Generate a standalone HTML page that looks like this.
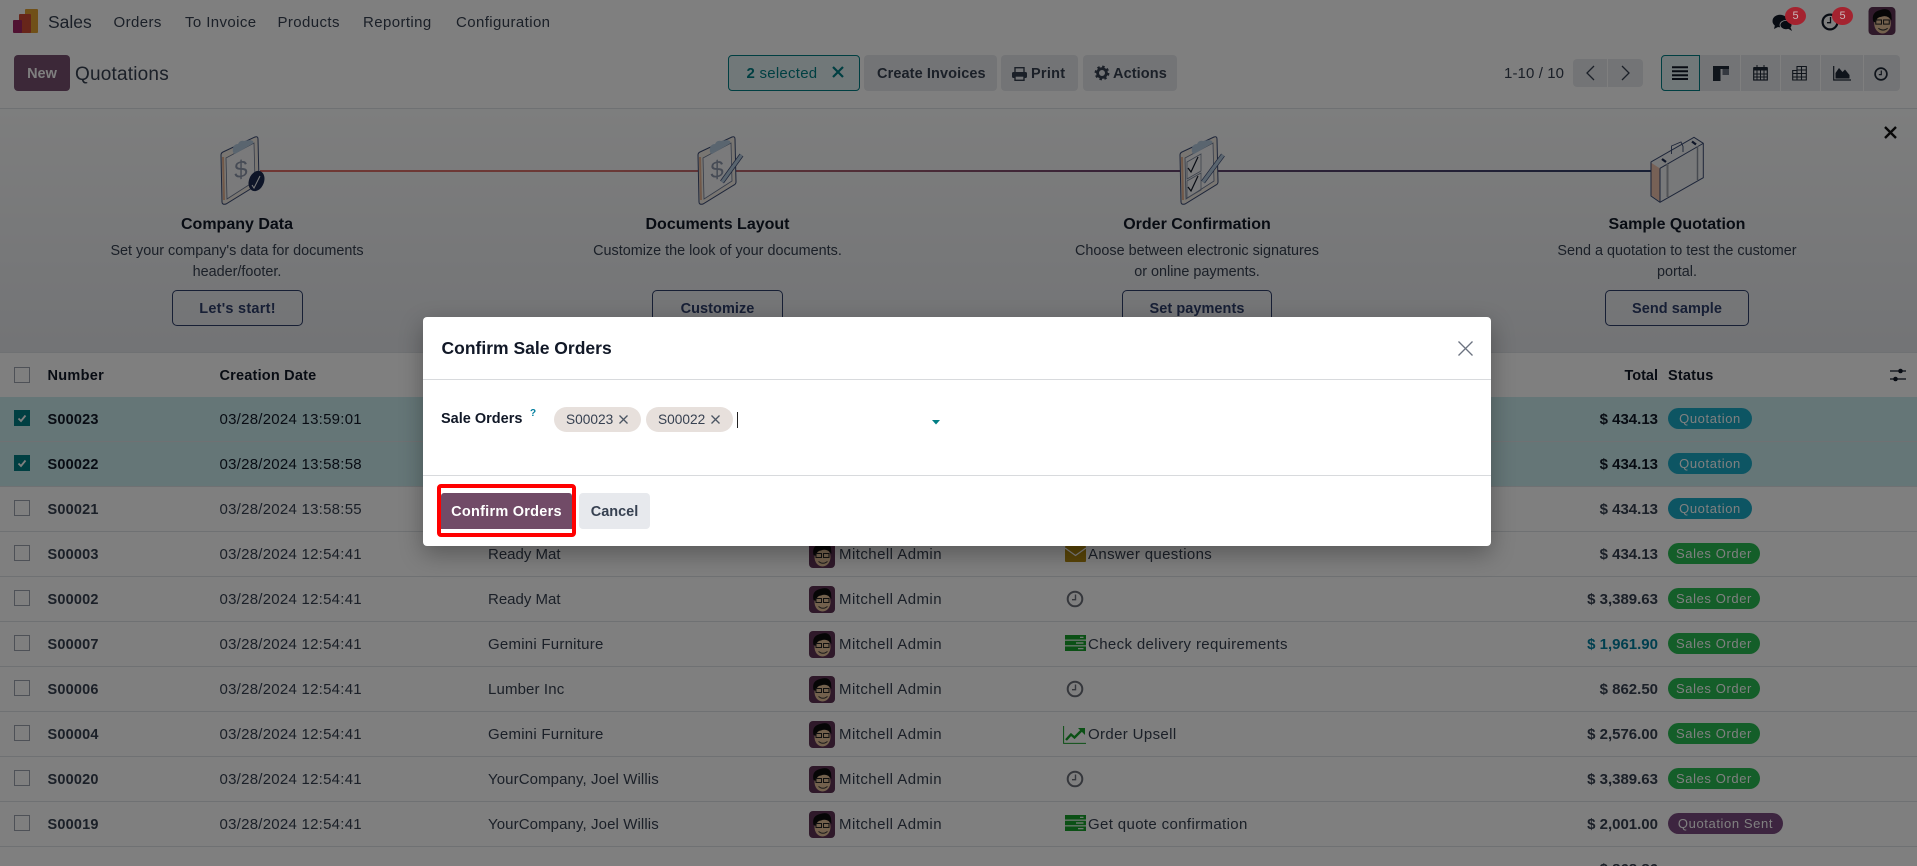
<!DOCTYPE html>
<html lang="en"><head><meta charset="utf-8"><title>Quotations</title>
<style>
html,body{margin:0;padding:0;width:1917px;height:866px;overflow:hidden}
body{background:#fff;font-family:"Liberation Sans",sans-serif;color:#374151;font-size:15px}
#p{position:relative;width:1917px;height:866px;overflow:hidden;background:#fff}
.t{position:absolute;white-space:nowrap;line-height:20px}
.nav{font-size:15px;letter-spacing:.4px;top:13px;color:#374151}
.btn{position:absolute;top:55px;height:36px;border-radius:4px;background:#e7e9ed}
.bt{font-weight:bold;font-size:14.5px;top:64px;color:#374151;letter-spacing:.1px}
.ttl{font-weight:bold;font-size:16px;top:215px;color:#111827;text-align:center;width:400px}
.dsc{font-size:14.4px;text-align:center;width:400px;color:#374151}
.ob{position:absolute;top:290px;height:34px;border:1px solid #2f3f6a;border-radius:5px;font-weight:bold;font-size:14.5px;line-height:36px;text-align:center;color:#2f3f6a;letter-spacing:.05px}
.r{position:absolute;left:0;width:1917px;height:44px;border-bottom:1px solid #dee2e6;background:#fff}
.r.s{background:#caecee;color:#111827}
.cb{position:absolute;left:14px;top:13px;width:14px;height:14px;border:1px solid #9ca3af;background:#fff;display:block}
.cb.on{border-color:#017e84;background:#017e84}
.cb.on svg{position:absolute;left:2px;top:2px}
.n{position:absolute;left:47.5px;top:13px;font-weight:bold;font-size:14.5px;letter-spacing:.2px;line-height:20px}
.d{position:absolute;left:219.5px;top:13px;letter-spacing:.25px;line-height:20px;white-space:nowrap}
.c{position:absolute;left:488px;top:13px;letter-spacing:.1px;line-height:20px;white-space:nowrap}
.m{position:absolute;left:839px;top:13px;letter-spacing:.45px;line-height:20px;white-space:nowrap}
.a{position:absolute;left:1088px;top:13px;letter-spacing:.36px;line-height:20px;white-space:nowrap}
.av{position:absolute;left:809px;top:9px;width:26px;height:27px}
.tot{position:absolute;right:259px;top:13px;font-weight:bold;font-size:15px;line-height:20px;white-space:nowrap}
.bd{position:absolute;left:1668px;top:11px;height:21px;line-height:21px;border-radius:11px;color:#fff;font-size:13px;letter-spacing:.6px;text-align:center}
.q{width:84px;background:#1aaac6}
.so{width:92px;background:#28bc52}
.qs{width:115px;background:#7a4b80}
#ov{position:absolute;left:0;top:0;width:1917px;height:866px;background:rgba(0,0,0,.5);z-index:10}
#md{position:absolute;left:423px;top:317px;width:1068px;height:229px;background:#fff;border-radius:4px;z-index:20;box-shadow:0 8px 24px rgba(0,0,0,.3)}
.tag{position:absolute;top:90px;height:25px;border-radius:13px;background:#e7e0dc;font-size:13.7px;line-height:26px;color:#374151;padding-left:12px;box-sizing:border-box}
.red{position:absolute;z-index:20;width:21px;height:18px;border-radius:50%;background:#a4232f;color:#c9b8ba;font-size:11px;line-height:18px;text-align:center;top:7px}
svg{display:block}
</style></head>
<body>
<div id="p">
<svg width="0" height="0" style="position:absolute">
<defs>
<symbol id="av" viewBox="0 0 26 27">
<rect width="26" height="27" rx="4" fill="#5e3355"/>
<ellipse cx="13.5" cy="16" rx="8" ry="9.5" fill="#e6c29a"/>
<path d="M4.500 14Q2.500 5 11 3Q20 0 22 7L22.500 13Q18 7 12 9.500Q8 9.500 7 15Z" fill="#0d0d0d"/>
<rect x="7" y="12.500" width="5.500" height="4" fill="none" stroke="#222" stroke-width="1"/>
<rect x="14.500" y="12.500" width="5.500" height="4" fill="none" stroke="#222" stroke-width="1"/>
<path d="M9.500 20.500Q14 24 18.500 20.500" fill="none" stroke="#333" stroke-width="1"/>
</symbol>
<symbol id="clk" viewBox="0 0 18 18">
<circle cx="9" cy="9" r="7.300" fill="none" stroke="#6b6f78" stroke-width="2"/>
<path d="M9.500 4.500V9.700H6" fill="none" stroke="#6b6f78" stroke-width="1.400"/>
</symbol>
<symbol id="srv" viewBox="0 0 21 16">
<rect width="21" height="4.600" fill="#17a02a"/><rect y="5.700" width="21" height="4.600" fill="#17a02a"/><rect y="11.400" width="21" height="4.600" fill="#17a02a"/>
<path d="M15 2.300h3.500M11 8h7.500M13 13.700h5.500" stroke="#fff" stroke-width="1.200"/>
</symbol>
<symbol id="board" viewBox="0 0 48 70">
<path d="M1 19Q1 17 3 16L35 1Q38 0 38 3L39 46Q39 48 37 49L6 68Q2 69 2 66Z" fill="#f3ece5" stroke="#3a4a72" stroke-width="1"/>
<path d="M3 21L4 64" stroke="#e2b090" stroke-width="2"/>
<path d="M6 22L34 7L35 45L7 63Z" fill="#f4f5f6" stroke="#6a7690" stroke-width=".8"/>
<path d="M13 12Q14 8 18 8Q20 4 24 5L30 4L33 5Q34 7 32 8L15 18Q12 17 13 12Z" fill="#b5cadf"/>
</symbol>
</defs>
</svg>

<!-- top nav -->
<svg style="position:absolute;left:13px;top:9px" width="25" height="24"><rect x="12" y="0" width="13" height="24" rx="1" fill="#e0a030"/><rect x="6" y="5" width="12" height="19" rx="1" fill="#cf4a34"/><rect x="0" y="11" width="9" height="13" rx="1" fill="#a02464"/></svg>
<span class="t" style="left:48px;top:12px;font-size:17.5px;color:#374151">Sales</span>
<span class="t nav" style="left:113.5px">Orders</span>
<span class="t nav" style="left:185px">To Invoice</span>
<span class="t nav" style="left:277.5px">Products</span>
<span class="t nav" style="left:363px">Reporting</span>
<span class="t nav" style="left:456px">Configuration</span>

<svg style="position:absolute;left:1772px;top:13px" width="24" height="19" viewBox="0 0 24 19"><ellipse cx="8" cy="8" rx="7.500" ry="6.300" fill="#111827"/><path d="M3 12L2 16L8 13Z" fill="#111827"/><ellipse cx="14" cy="12" rx="6" ry="4.600" fill="#111827" stroke="#fff" stroke-width=".8"/><path d="M15 15L20 18L18 13Z" fill="#111827"/></svg>
<span class="red" style="left:1785px">5</span>
<svg style="position:absolute;left:1820px;top:13px" width="20" height="18" viewBox="0 0 20 18"><circle cx="10" cy="9" r="7.400" fill="none" stroke="#111827" stroke-width="2.200"/><path d="M10.500 4V9.700H7" fill="none" stroke="#111827" stroke-width="1.300"/></svg>
<span class="red" style="left:1832px">5</span>
<svg style="position:absolute;left:1868px;top:7px" width="28" height="28"><use href="#av"/></svg>

<!-- control panel -->
<div class="btn" style="left:14px;width:56px;background:#785070"></div>
<span class="t" style="left:14px;width:56px;top:64px;text-align:center;color:#fff;font-weight:bold;font-size:14.5px">New</span>
<span class="t" style="left:75px;top:65px;font-size:19px;letter-spacing:.2px;color:#374151">Quotations</span>

<div class="btn" style="left:728px;width:130px;height:34px;background:#e3f1f2;border:1px solid #017e84"></div>
<span class="t" style="left:746.5px;top:64px;color:#017e84;font-size:15px;letter-spacing:.25px"><b>2</b> selected</span>
<svg style="position:absolute;left:832px;top:66px" width="12" height="12"><path d="M1 1L11 11M11 1L1 11" stroke="#017e84" stroke-width="2.200"/></svg>
<div class="btn" style="left:864px;width:133px"></div><span class="t bt" style="left:877px">Create Invoices</span>
<div class="btn" style="left:1001px;width:77px"></div>
<svg style="position:absolute;left:1012px;top:67px" width="15" height="14" viewBox="0 0 15 14"><rect x="3" y="0.700" width="9" height="5" fill="none" stroke="#374151" stroke-width="1.400"/><rect x="0" y="5" width="15" height="6" rx="1.500" fill="#374151"/><rect x="3" y="9" width="9" height="4.300" fill="#e7e9ed" stroke="#374151" stroke-width="1.400"/></svg>
<span class="t bt" style="left:1031px;letter-spacing:.25px">Print</span>
<div class="btn" style="left:1083px;width:94px"></div>
<svg style="position:absolute;left:1094px;top:65px" width="16" height="16" viewBox="0 0 16 16"><circle cx="8" cy="8" r="6.300" fill="none" stroke="#374151" stroke-width="2.200" stroke-dasharray="2.470 2.470"/><circle cx="8" cy="8" r="4.400" fill="none" stroke="#374151" stroke-width="2.800"/></svg>
<span class="t bt" style="left:1113px">Actions</span>

<span class="t" style="left:1504px;top:64px;font-size:15px;letter-spacing:.1px">1-10 / 10</span>
<div class="btn" style="left:1573px;top:59px;width:70px;height:28px"></div>
<div style="position:absolute;left:1607px;top:59px;width:1px;height:28px;background:#fff"></div>
<svg style="position:absolute;left:1585px;top:65px" width="10" height="16"><path d="M9 1L2 8L9 15" fill="none" stroke="#374151" stroke-width="1.300"/></svg>
<svg style="position:absolute;left:1621px;top:65px" width="10" height="16"><path d="M1 1L8 8L1 15" fill="none" stroke="#374151" stroke-width="1.300"/></svg>

<div class="btn" style="left:1661px;width:239px;background:#e7e9ed"></div>
<div class="btn" style="left:1661px;width:37px;height:34px;background:#e3f1f2;border:1px solid #017e84;border-radius:4px 0 0 4px"></div>
<div style="position:absolute;left:1740px;top:55px;width:1px;height:36px;background:#fff"></div>
<div style="position:absolute;left:1780px;top:55px;width:1px;height:36px;background:#fff"></div>
<div style="position:absolute;left:1820px;top:55px;width:1px;height:36px;background:#fff"></div>
<div style="position:absolute;left:1863px;top:55px;width:1px;height:36px;background:#fff"></div>
<svg style="position:absolute;left:1672px;top:66px" width="16" height="14"><path d="M0 1.200h16M0 5.200h16M0 9.200h16M0 13h16" stroke="#111827" stroke-width="2"/></svg>
<svg style="position:absolute;left:1713px;top:66px" width="16" height="15"><rect x="0" y="0" width="16" height="3" fill="#1f2937"/><rect x="0" y="0" width="7.500" height="15" fill="#1f2937"/><rect x="9.500" y="3" width="6.500" height="6" fill="#6b7280"/></svg>
<svg style="position:absolute;left:1753px;top:65px" width="15" height="16" viewBox="0 0 15 16"><rect x=".7" y="3" width="13.600" height="12" fill="none" stroke="#1f2937" stroke-width="1.200"/><rect x=".7" y="2" width="13.600" height="3.500" fill="#1f2937"/><path d="M4 0v3M11 0v3M.7 9h13.600M.7 12h13.600M4 5v10M7.500 5v10M11 5v10" stroke="#1f2937" stroke-width="1"/></svg>
<svg style="position:absolute;left:1792px;top:65px" width="15" height="16" viewBox="0 0 15 16"><path d="M5 1.500h9.300V15H.7V5.500H5ZM.7 8.500h13.600M.7 12h13.600M5 1.500V15M9.500 1.500V15M5 5h9.300" fill="none" stroke="#1f2937" stroke-width="1.100"/></svg>
<svg style="position:absolute;left:1833px;top:66px" width="18" height="15" viewBox="0 0 18 15"><path d="M.7 0V14H18" fill="none" stroke="#1f2937" stroke-width="1.200"/><path d="M2.500 12.500V7L6 2L9.500 6L12 3.500L16.500 9V12.500Z" fill="#1f2937"/></svg>
<svg style="position:absolute;left:1874px;top:67px" width="14" height="14" viewBox="0 0 14 14"><circle cx="7" cy="7" r="5.900" fill="none" stroke="#1f2937" stroke-width="1.700"/><path d="M7.300 3.500V7.600H4.800" fill="none" stroke="#1f2937" stroke-width="1.200"/></svg>

<div style="position:absolute;left:0;top:108px;width:1917px;height:1px;background:#dee2e6"></div>

<!-- onboarding banner -->
<div style="position:absolute;left:0;top:109px;width:1917px;height:243px;background:linear-gradient(#fbfcfc,#e6e8ec)"></div>
<div style="position:absolute;left:0;top:352px;width:1917px;height:1px;background:#dee2e6"></div>
<div style="position:absolute;left:260px;top:170px;width:1392px;height:2px;background:linear-gradient(90deg,#e06f68 0%,#d5736f 25%,#70466f 60%,#2f3f6a 100%)"></div>

<svg style="position:absolute;left:220px;top:136px" width="48" height="70"><use href="#board"/></svg>
<svg style="position:absolute;left:0;top:0;overflow:visible" width="1" height="1">
<text x="241" y="178" font-size="24" text-anchor="middle" fill="#8d96aa" font-family="Liberation Sans,sans-serif" transform="skewY(-10) translate(0,42)">$</text>
<ellipse cx="256.500" cy="181" rx="7.500" ry="10.500" transform="rotate(22 256.500 181)" fill="#1d2b50"/>
<path d="M252 185L254 188L260 176" fill="none" stroke="#fff" stroke-width="1"/>
</svg>

<svg style="position:absolute;left:697px;top:136px" width="48" height="70"><use href="#board"/></svg>
<svg style="position:absolute;left:0;top:0;overflow:visible" width="1" height="1">
<text x="717" y="178" font-size="24" text-anchor="middle" fill="#8d96aa" font-family="Liberation Sans,sans-serif" transform="skewY(-10) translate(0,126)">$</text>
<path d="M741.500 155L722 182" stroke="#3a4a72" stroke-width="4.600"/><path d="M741.500 155L722 182" stroke="#b5cadf" stroke-width="3.200"/>
</svg>

<svg style="position:absolute;left:1179px;top:136px" width="48" height="70"><use href="#board"/></svg>
<svg style="position:absolute;left:0;top:0;overflow:visible" width="1" height="1">
<path d="M1187 162L1201 154V171L1187 179ZM1187 181L1201 173V190L1187 198Z" fill="none" stroke="#7a8498" stroke-width=".8"/>
<path d="M1188 168L1191 172L1198 157M1188 187L1191 191L1198 176" fill="none" stroke="#111827" stroke-width="1.200"/>
<path d="M1223 155L1203 182" stroke="#3a4a72" stroke-width="4.600"/><path d="M1223 155L1203 182" stroke="#b5cadf" stroke-width="3.200"/>
</svg>

<svg style="position:absolute;left:0;top:0;overflow:visible" width="1" height="1">
<path d="M1651 162L1694 137.300L1703.300 143.300V177.700L1660 202.300L1651 196Z" fill="#f1f3f4" stroke="#3a4a72" stroke-width="1"/>
<path d="M1651.500 163L1660 168.500V201.500L1651.500 195.500Z" fill="#eec2ac"/>
<path d="M1660 168.300L1703 143.500" stroke="#3a4a72" stroke-width="1"/>
<path d="M1660 168.300V202" stroke="#3a4a72" stroke-width="1"/>
<path d="M1667.500 164V197" stroke="#a4a8ae" stroke-width="2"/>
<path d="M1697.500 146V180" stroke="#8e94a0" stroke-width="1.500"/>
<path d="M1671.500 154V146L1681 142L1683 146.500V152" fill="none" stroke="#3a4a72" stroke-width=".9"/>
<path d="M1662 159L1666 162M1692 141.500L1696 144.500" stroke="#1d2b50" stroke-width="2.300"/>
</svg>

<span class="t ttl" style="left:37px">Company Data</span>
<span class="t dsc" style="left:37px;top:241px">Set your company's data for documents</span>
<span class="t dsc" style="left:37px;top:262px">header/footer.</span>
<div class="ob" style="left:172px;width:129px;letter-spacing:.25px">Let's start!</div>

<span class="t ttl" style="left:517.500px">Documents Layout</span>
<span class="t dsc" style="left:517.500px;top:241px">Customize the look of your documents.</span>
<div class="ob" style="left:652px;width:129px">Customize</div>

<span class="t ttl" style="left:997px">Order Confirmation</span>
<span class="t dsc" style="left:997px;top:241px">Choose between electronic signatures</span>
<span class="t dsc" style="left:997px;top:262px">or online payments.</span>
<div class="ob" style="left:1122px;width:148px">Set payments</div>

<span class="t ttl" style="left:1477px">Sample Quotation</span>
<span class="t dsc" style="left:1477px;top:241px">Send a quotation to test the customer</span>
<span class="t dsc" style="left:1477px;top:262px">portal.</span>
<div class="ob" style="left:1605px;width:142px">Send sample</div>

<svg style="position:absolute;left:1884px;top:126px" width="13" height="13"><path d="M1 1L12 12M12 1L1 12" stroke="#111" stroke-width="2.400"/></svg>

<!-- list header -->
<div class="r" style="top:353px;color:#111827"><i class="cb" style="top:14px"></i>
<b class="n" style="letter-spacing:.3px">Number</b>
<b class="d" style="font-size:14.500px;letter-spacing:.2px">Creation Date</b>
<b class="tot" style="font-size:14.500px">Total</b>
<b class="d" style="left:1668px;font-size:14.500px;letter-spacing:.2px">Status</b>
<svg style="position:absolute;left:1890px;top:14px" width="16" height="16" viewBox="0 0 16 16"><path d="M0 4h16M0 12h16" stroke="#111827" stroke-width="1.200"/><circle cx="10.500" cy="4" r="2.300" fill="#111827"/><circle cx="5.500" cy="12" r="2.300" fill="#111827"/></svg>
</div>

<!-- rows -->
<div class="r s" style="top:397px"><i class="cb on"><svg width="10" height="10"><path d="M1.500 5.500L4 8L8.500 2.500" fill="none" stroke="#fff" stroke-width="1.800"/></svg></i><b class="n">S00023</b><span class="d">03/28/2024 13:59:01</span><b class="tot">$ 434.13</b><span class="bd q">Quotation</span></div>
<div class="r s" style="top:442px"><i class="cb on"><svg width="10" height="10"><path d="M1.500 5.500L4 8L8.500 2.500" fill="none" stroke="#fff" stroke-width="1.800"/></svg></i><b class="n">S00022</b><span class="d">03/28/2024 13:58:58</span><b class="tot">$ 434.13</b><span class="bd q">Quotation</span></div>
<div class="r" style="top:487px"><i class="cb"></i><b class="n">S00021</b><span class="d">03/28/2024 13:58:55</span><b class="tot">$ 434.13</b><span class="bd q">Quotation</span></div>
<div class="r" style="top:532px"><i class="cb"></i><b class="n">S00003</b><span class="d">03/28/2024 12:54:41</span><span class="c" style="letter-spacing:0">Ready Mat</span><svg class="av"><use href="#av"/></svg><span class="m">Mitchell Admin</span>
<svg style="position:absolute;left:1064.500px;top:14px" width="21" height="16" viewBox="0 0 21 16"><rect width="21" height="16" rx="1" fill="#b38a10"/><path d="M0 2L10.500 9.500L21 2" fill="none" stroke="#fff" stroke-width="1.200"/></svg>
<span class="a">Answer questions</span><b class="tot">$ 434.13</b><span class="bd so">Sales Order</span></div>
<div class="r" style="top:577px"><i class="cb"></i><b class="n">S00002</b><span class="d">03/28/2024 12:54:41</span><span class="c" style="letter-spacing:0">Ready Mat</span><svg class="av"><use href="#av"/></svg><span class="m">Mitchell Admin</span>
<svg style="position:absolute;left:1065.500px;top:13px" width="18" height="18"><use href="#clk"/></svg>
<b class="tot">$ 3,389.63</b><span class="bd so">Sales Order</span></div>
<div class="r" style="top:622px"><i class="cb"></i><b class="n">S00007</b><span class="d">03/28/2024 12:54:41</span><span class="c" style="letter-spacing:.24px">Gemini Furniture</span><svg class="av"><use href="#av"/></svg><span class="m">Mitchell Admin</span>
<svg style="position:absolute;left:1064.500px;top:13px" width="21" height="16"><use href="#srv"/></svg>
<span class="a">Check delivery requirements</span><b class="tot" style="color:#017e9e">$ 1,961.90</b><span class="bd so">Sales Order</span></div>
<div class="r" style="top:667px"><i class="cb"></i><b class="n">S00006</b><span class="d">03/28/2024 12:54:41</span><span class="c" style="letter-spacing:.13px">Lumber Inc</span><svg class="av"><use href="#av"/></svg><span class="m">Mitchell Admin</span>
<svg style="position:absolute;left:1065.500px;top:13px" width="18" height="18"><use href="#clk"/></svg>
<b class="tot">$ 862.50</b><span class="bd so">Sales Order</span></div>
<div class="r" style="top:712px"><i class="cb"></i><b class="n">S00004</b><span class="d">03/28/2024 12:54:41</span><span class="c" style="letter-spacing:.24px">Gemini Furniture</span><svg class="av"><use href="#av"/></svg><span class="m">Mitchell Admin</span>
<svg style="position:absolute;left:1063px;top:14px" width="23" height="18" viewBox="0 0 23 18"><path d="M.6 0V17.400H23" fill="none" stroke="#17a02a" stroke-width="1"/><path d="M3 14L8 8.500L11.500 11.500L19 4" fill="none" stroke="#17a02a" stroke-width="2.400"/><path d="M15 2H22V9Z" fill="#17a02a"/></svg>
<span class="a">Order Upsell</span><b class="tot">$ 2,576.00</b><span class="bd so">Sales Order</span></div>
<div class="r" style="top:757px"><i class="cb"></i><b class="n">S00020</b><span class="d">03/28/2024 12:54:41</span><span class="c">YourCompany, Joel Willis</span><svg class="av"><use href="#av"/></svg><span class="m">Mitchell Admin</span>
<svg style="position:absolute;left:1065.500px;top:13px" width="18" height="18"><use href="#clk"/></svg>
<b class="tot">$ 3,389.63</b><span class="bd so">Sales Order</span></div>
<div class="r" style="top:802px"><i class="cb"></i><b class="n">S00019</b><span class="d">03/28/2024 12:54:41</span><span class="c">YourCompany, Joel Willis</span><svg class="av"><use href="#av"/></svg><span class="m">Mitchell Admin</span>
<svg style="position:absolute;left:1064.500px;top:13px" width="21" height="16"><use href="#srv"/></svg>
<span class="a">Get quote confirmation</span><b class="tot">$ 2,001.00</b><span class="bd qs">Quotation Sent</span></div>
<b class="t" style="right:259px;top:860px;font-size:15px">$ 868.86</b>

<div id="ov"></div>

<!-- modal -->
<div id="md">
<span class="t" style="left:18.500px;top:21px;font-size:17.500px;font-weight:bold;color:#111827">Confirm Sale Orders</span>
<svg style="position:absolute;left:1035px;top:24px" width="15" height="15"><path d="M.5 .5L14.500 14.500M14.500 .5L.5 14.500" stroke="#6b7280" stroke-width="1.300"/></svg>
<div style="position:absolute;left:0;top:62px;width:100%;height:1px;background:#d8dadd"></div>
<b class="t" style="left:18px;top:92px;font-size:14.500px;color:#111827">Sale Orders</b>
<b class="t" style="left:107px;top:87px;font-size:10px;color:#017e9e">?</b>
<div class="tag" style="left:131px;width:87px">S00023<svg style="position:absolute;left:65px;top:8px" width="9" height="9"><path d="M.5 .5L8.500 8.500M8.500 .5L.5 8.500" stroke="#4b5563" stroke-width="1.300"/></svg></div>
<div class="tag" style="left:223px;width:87px">S00022<svg style="position:absolute;left:65px;top:8px" width="9" height="9"><path d="M.5 .5L8.500 8.500M8.500 .5L.5 8.500" stroke="#4b5563" stroke-width="1.300"/></svg></div>
<div style="position:absolute;left:314px;top:95px;width:1px;height:16px;background:#222"></div>
<svg style="position:absolute;left:509px;top:103px" width="8" height="5"><path d="M0 0H8L4 4.500Z" fill="#017e84"/></svg>
<div style="position:absolute;left:0;top:158px;width:100%;height:1px;background:#d8dadd"></div>
<div style="position:absolute;left:18px;top:176px;width:131px;height:36px;border-radius:3px 3px 0 0;background:#714b67"></div>
<span class="t" style="left:18px;width:131px;top:185px;text-align:center;color:#fff;font-weight:bold;font-size:14.500px;letter-spacing:.25px">Confirm Orders</span>
<div style="position:absolute;left:14px;top:167px;width:131px;height:45px;border:4px solid #f00;border-radius:4px"></div>
<div style="position:absolute;left:156px;top:176px;width:71px;height:36px;border-radius:4px;background:#e7e9ed"></div>
<span class="t" style="left:156px;width:71px;top:185px;text-align:center;font-weight:bold;font-size:14.500px;color:#374151">Cancel</span>
</div>
</div>
</body></html>
